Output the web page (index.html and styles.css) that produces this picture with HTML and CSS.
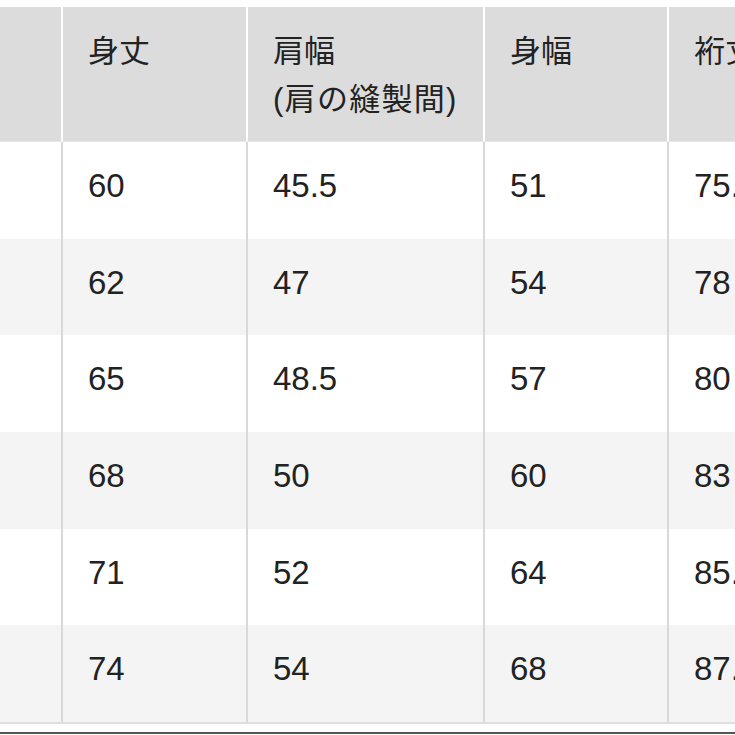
FILE: index.html
```html
<!DOCTYPE html>
<html lang="ja">
<head>
<meta charset="utf-8">
<title>サイズ表</title>
<link rel="stylesheet" href="styles.css">
</head>
<body>
<div class="page">
  <div class="table">
    <div class="cell head first"></div>
    <div class="cell head">身丈</div>
    <div class="cell head">肩幅<br><span class="sub">(肩の縫製間)</span></div>
    <div class="cell head">身幅</div>
    <div class="cell head">裄丈</div>

    <div class="cell first"></div>
    <div class="cell">60</div>
    <div class="cell">45.5</div>
    <div class="cell">51</div>
    <div class="cell">75.5</div>

    <div class="cell first alt"></div>
    <div class="cell alt">62</div>
    <div class="cell alt">47</div>
    <div class="cell alt">54</div>
    <div class="cell alt">78</div>

    <div class="cell first"></div>
    <div class="cell">65</div>
    <div class="cell">48.5</div>
    <div class="cell">57</div>
    <div class="cell">80</div>

    <div class="cell first alt"></div>
    <div class="cell alt">68</div>
    <div class="cell alt">50</div>
    <div class="cell alt">60</div>
    <div class="cell alt">83</div>

    <div class="cell first"></div>
    <div class="cell">71</div>
    <div class="cell">52</div>
    <div class="cell">64</div>
    <div class="cell">85.5</div>

    <div class="cell first alt"></div>
    <div class="cell alt">74</div>
    <div class="cell alt">54</div>
    <div class="cell alt">68</div>
    <div class="cell alt">87.5</div>
  </div>
  <div class="rule-light"></div>
  <div class="rule-dark"></div>
</div>
</body>
</html>
```

FILE: styles.css
```css
html, body {
  margin: 0;
  padding: 0;
  background: #ffffff;
}

.page {
  width: 735px;
  height: 735px;
  overflow: hidden;
  padding-top: 7px;
  box-sizing: border-box;
  font-family: "Liberation Sans", "Noto Sans CJK JP", sans-serif;
  color: #222222;
}

.table {
  display: grid;
  grid-template-columns: 61px 185px 237px 184px 1fr;
  grid-template-rows: 135px repeat(6, 96.67px);
  width: 735px;
}

.cell {
  box-sizing: border-box;
  border-left: 2px solid #d9d9d9;
  padding: 20px 0 0 25px;
  font-size: 33px;
  line-height: 48px;
  white-space: nowrap;
  overflow: hidden;
  background: #ffffff;
}

.cell.first {
  border-left: none;
  padding: 0;
}

.cell.alt {
  background: #f4f4f4;
}

.cell.head {
  background: #dcdcdc;
  border-left-color: #ffffff;
  font-size: 31px;
  padding-top: 21px;
  border-bottom: 1px solid #e6e6e6;
}

.cell.head.first {
  border-left: none;
}

.sub {
  letter-spacing: 1.3px;
}

.rule-light {
  height: 2px;
  background: #dedede;
}

.rule-dark {
  height: 2px;
  margin-top: 8px;
  background: #555555;
}
```
